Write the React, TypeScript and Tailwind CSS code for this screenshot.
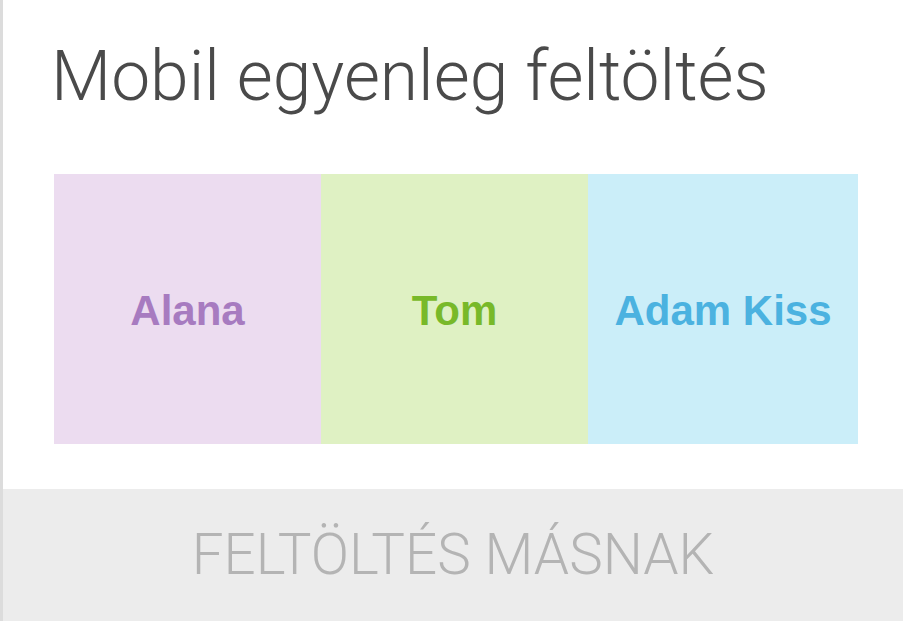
import React from "react";

const tiles = [
  { name: "Alana", bg: "bg-[#ecdcf0]", fg: "text-[#a77bc0]", w: "w-[267px]" },
  { name: "Tom", bg: "bg-[#dff1c3]", fg: "text-[#78b929]", w: "w-[267px]" },
  { name: "Adam Kiss", bg: "bg-[#cbeef9]", fg: "text-[#4bb2e0]", w: "w-[270px]" },
];

export default function App() {
  return (
    <div className="flex h-[621px] w-[903px] overflow-hidden bg-white">
      <div className="w-[3px] shrink-0 bg-[#dcdcdc]" />
      <div className="flex flex-1 flex-col">
        <div className="flex h-[489px] flex-col bg-white">
          <h1
            className="mt-[37px] pl-[48px] text-[69.5px] font-light leading-[80px] text-[#4a4a4a]"
            style={{ fontFamily: "Roboto, 'Liberation Sans', sans-serif" }}
          >
            Mobil egyenleg feltöltés
          </h1>
          <div className="mt-[57px] flex h-[270px] pl-[51px]">
            {tiles.map((t) => (
              <div
                key={t.name}
                className={`flex items-center justify-center pt-[3px] ${t.w} ${t.bg}`}
              >
                <span
                  className={`text-[42px] font-bold ${t.fg}`}
                  style={{ fontFamily: "'Liberation Sans', Arial, sans-serif" }}
                >
                  {t.name}
                </span>
              </div>
            ))}
          </div>
        </div>
        <div className="flex flex-1 items-center justify-center bg-[#ececec]">
          <span
            className="text-[56.5px] font-light text-[#b4b4b4]"
            style={{ fontFamily: "Roboto, 'Liberation Sans', sans-serif" }}
          >
            FELTÖLTÉS MÁSNAK
          </span>
        </div>
      </div>
    </div>
  );
}
